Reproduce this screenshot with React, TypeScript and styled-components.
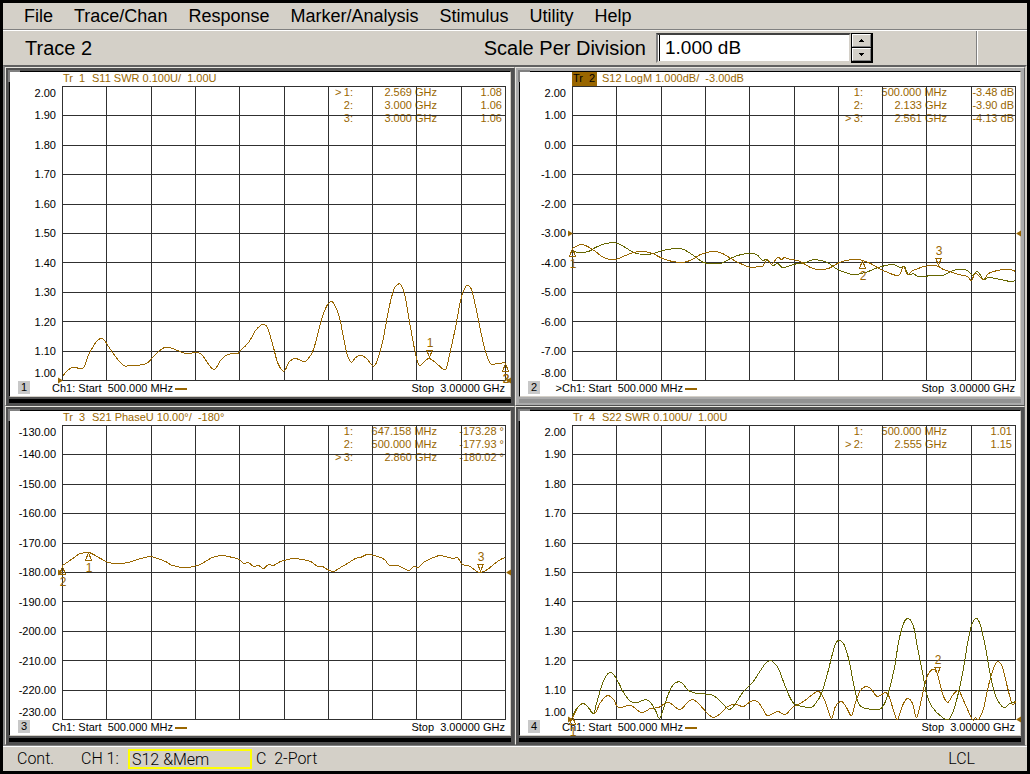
import React from "react";
import styled, { createGlobalStyle } from "styled-components";

const AMBER = "#996600";
const OLIVE = "#666600";
const FACE = "#d4d0c8";
const UI = `"Liberation Sans", Arial, sans-serif`;
const PLOT_W = 444;
const PLOT_H = 295;

type Point = [number, number];

interface Trace {
  color: string;
  points: string;
}

interface MarkerGlyph {
  x: number;
  y: number;
  label: string;
  up?: boolean;
}

interface MarkerRow {
  active?: boolean;
  id: string;
  freq: string;
  value: string;
}

interface ChartWindow {
  id: number;
  active?: boolean;
  title: string;
  unitless?: boolean;
  ticks: string[];
  refY: number;
  traces: Trace[];
  glyphs: MarkerGlyph[];
  rows: MarkerRow[];
}

const swrTicks = ["2.00", "1.90", "1.80", "1.70", "1.60", "1.50", "1.40", "1.30", "1.20", "1.10", "1.00"];

const windows: ChartWindow[] = [
  {
    id: 1,
    title: "S11 SWR 0.100U/  1.00U",
    unitless: true,
    ticks: swrTicks,
    refY: 294,
    traces: [
      {
        color: AMBER,
        points:
          "0,290 5,284 10,281 19,282 22,280 25,271 30,261 35,254 39,252 42,254 46,260 53,270 61,279 68,279 74,279 84,277 90,271 96,265 102,261 107,261 115,264 124,267 135,266 140,269 151,283 158,274 165,268 175,267 177,265 186,256 193,244 198,239 201,238 205,241 211,261 215,276 220,284 223,283 227,275 233,272 241,275 245,273 251,263 258,237 263,222 268,215 272,218 277,231 281,251 285,269 289,276 293,271 299,269 304,272 310,279 313,278 317,267 321,251 326,224 331,204 335,198 339,199 343,212 348,241 353,267 357,279 363,274 367,272 373,276 381,283 384,281 388,264 393,241 398,214 402,202 405,199 409,203 414,224 418,244 423,265 428,277 435,277 443,276",
      },
    ],
    glyphs: [
      { x: 367, y: 272, label: "1" },
      { x: 443, y: 277, label: "2", up: true },
      { x: 443, y: 277, label: "3", up: true },
    ],
    rows: [
      { active: true, id: "1:", freq: "2.569 GHz", value: "1.08" },
      { id: "2:", freq: "3.000 GHz", value: "1.06" },
      { id: "3:", freq: "3.000 GHz", value: "1.06" },
    ],
  },
  {
    id: 2,
    active: true,
    title: "S12 LogM 1.000dB/  -3.00dB",
    ticks: ["2.00", "1.00", "0.00", "-1.00", "-2.00", "-3.00", "-4.00", "-5.00", "-6.00", "-7.00", "-8.00"],
    refY: 147,
    traces: [
      {
        color: OLIVE,
        points:
          "0,165 8,166 16,165 23,161 30,158 40,156 45,157 53,161 61,166 71,168 81,167 90,164 96,163 103,162 111,163 121,169 131,176 140,177 148,177 158,172 165,169 175,167 184,168 190,174 194,173 200,179 205,177 210,181 218,179 225,177 233,176 241,173 248,174 255,176 265,183 273,186 281,188 293,186 303,182 313,179 321,178 328,181 332,180 335,187 339,188 341,187 346,190 361,189 370,189 378,185 385,183 395,184 400,189 405,185 411,193 416,191 428,193 438,195 443,194",
      },
      {
        color: AMBER,
        points:
          "0,162 8,158 15,160 23,165 31,171 43,173 53,169 61,166 70,165 80,167 90,172 100,175 110,176 120,173 128,168 140,165 150,167 160,173 170,178 179,181 186,180 190,180 195,173 199,178 205,171 209,173 212,171 218,173 225,174 231,177 238,181 246,183 256,182 265,177 273,174 285,173 293,175 298,177 305,181 313,185 326,189 331,180 335,188 340,184 346,182 351,180 361,179 366,180 371,183 380,186 390,189 395,190 399,194 403,187 411,193 416,187 425,184 431,183 438,183 443,185",
      },
    ],
    glyphs: [
      { x: 0, y: 162, label: "1", up: true },
      { x: 290, y: 174, label: "2", up: true },
      { x: 366, y: 180, label: "3" },
    ],
    rows: [
      { id: "1:", freq: "500.000 MHz", value: "-3.48 dB" },
      { id: "2:", freq: "2.133 GHz", value: "-3.90 dB" },
      { active: true, id: "3:", freq: "2.561 GHz", value: "-4.13 dB" },
    ],
  },
  {
    id: 3,
    title: "S21 PhaseU 10.00°/  -180°",
    ticks: ["-130.00", "-140.00", "-150.00", "-160.00", "-170.00", "-180.00", "-190.00", "-200.00", "-210.00", "-220.00", "-230.00"],
    refY: 147,
    traces: [
      {
        color: AMBER,
        points:
          "0,140 6,136 13,131 18,128 26,127 31,129 38,133 46,137 55,138 66,137 75,134 83,132 88,131 95,133 103,136 110,140 123,142 135,140 143,136 150,132 160,130 170,132 177,134 181,138 186,137 191,141 196,140 201,143 206,139 211,140 218,136 226,134 233,133 248,136 255,141 260,141 265,144 271,146 278,142 285,138 293,133 298,132 305,129 315,131 322,134 327,140 335,140 346,145 351,141 356,142 361,137 371,132 378,130 386,132 391,133 395,132 400,139 406,140 413,145 418,147 425,144 431,139 438,134 443,132",
      },
    ],
    glyphs: [
      { x: 26, y: 127, label: "1", up: true },
      { x: 0, y: 141, label: "2", up: true },
      { x: 418, y: 147, label: "3" },
    ],
    rows: [
      { id: "1:", freq: "647.158 MHz", value: "-173.28 °" },
      { id: "2:", freq: "500.000 MHz", value: "-177.93 °" },
      { active: true, id: "3:", freq: "2.860 GHz", value: "-180.02 °" },
    ],
  },
  {
    id: 4,
    title: "S22 SWR 0.100U/  1.00U",
    unitless: true,
    ticks: swrTicks,
    refY: 294,
    traces: [
      {
        color: AMBER,
        points:
          "0,292 6,281 11,278 16,282 22,288 28,277 35,270 41,274 46,282 58,280 69,287 78,283 86,282 96,277 107,284 115,277 120,274 126,278 135,288 141,292 148,288 155,281 163,279 171,281 178,276 185,276 190,283 195,290 205,286 213,289 220,282 231,276 240,269 246,266 251,272 255,283 259,293 263,281 269,276 274,282 279,290 283,277 288,265 294,261 299,264 305,271 313,267 317,272 321,285 325,294 330,280 335,273 340,278 344,292 348,278 352,260 356,248 361,244 365,249 370,268 375,277 380,270 386,265 391,275 400,294 403,292 406,294 411,283 416,260 421,243 425,236 430,242 435,262 439,277 441,279 443,276",
      },
      {
        color: OLIVE,
        points:
          "0,290 5,282 11,278 15,281 21,288 24,278 30,258 34,250 37,247 41,249 46,257 51,267 58,276 65,277 73,274 78,277 83,285 87,293 91,283 96,268 102,258 109,257 116,265 125,268 138,269 145,273 151,279 157,284 163,278 171,266 180,257 188,245 193,238 198,235 201,237 206,243 212,259 218,273 223,279 238,282 243,278 249,268 255,248 259,232 263,218 267,215 272,220 277,237 281,258 285,275 290,282 306,284 311,280 316,267 322,242 326,217 331,198 336,193 341,201 345,222 350,247 354,268 360,282 370,292 376,294 381,285 386,267 391,243 395,218 399,200 404,193 408,200 413,222 418,250 423,270 431,282 437,278 443,276",
      },
    ],
    glyphs: [
      { x: 0, y: 291, label: "1", up: true },
      { x: 365, y: 250, label: "2" },
    ],
    rows: [
      { id: "1:", freq: "500.000 MHz", value: "1.01" },
      { active: true, id: "2:", freq: "2.555 GHz", value: "1.15" },
    ],
  },
];

/* Catmull-Rom spline through the sampled points, written as cubic segments. */
function smoothPath(source: string): string {
  const p = source.split(" ").map((s) => s.split(",").map(Number) as Point);
  let d = `M${p[0][0]} ${p[0][1]}`;
  for (let i = 0; i < p.length - 1; i++) {
    const a = p[Math.max(i - 1, 0)];
    const b = p[i];
    const c = p[i + 1];
    const e = p[Math.min(i + 2, p.length - 1)];
    d += `C${b[0] + (c[0] - a[0]) / 6} ${b[1] + (c[1] - a[1]) / 6} ${c[0] - (e[0] - b[0]) / 6} ${c[1] - (e[1] - b[1]) / 6} ${c[0]} ${c[1]}`;
  }
  return d;
}

const GlobalStyle = createGlobalStyle`
  * { box-sizing: border-box; }
  body { margin: 0; background: #000; color: #000; }
`;

const Shell = styled.div`
  display: flex;
  flex-direction: column;
  min-height: 100vh;
  padding: 3px;
  background: #000;
  font-family: ${UI};
`;

const MenuBar = styled.nav`
  display: flex;
  align-items: center;
  gap: 21px;
  height: 28px;
  padding: 0 0 2px 21px;
  background: ${FACE};
  border-bottom: 1px solid #fff;
  box-shadow: inset 0 -1px #808080;
`;

const MenuButton = styled.button`
  padding: 0;
  border: 0;
  background: none;
  color: #000;
  font: 18px/24px ${UI};
`;

const Toolbar = styled.div`
  display: flex;
  height: 34px;
  background: ${FACE};
`;

const ToolbarMain = styled.div`
  display: flex;
  flex: 1;
  align-items: center;
  padding: 0 103px 0 22px;
`;

const ToolbarEnd = styled.div`
  width: 51px;
  border-left: 1px solid #808080;
  box-shadow: inset 1px 0 #fff;
`;

const ActiveTrace = styled.span`
  flex: 1;
  font-size: 20px;
  line-height: 24px;
`;

const ScaleLabel = styled.label`
  margin-right: 10px;
  font-size: 20px;
  line-height: 24px;
`;

const ScaleInput = styled.input`
  width: 195px;
  height: 30px;
  padding: 0 0 0 7px;
  border: 2px solid;
  border-color: #404040 ${FACE} ${FACE} #808080;
  border-radius: 0;
  outline: 0;
  background: linear-gradient(#000, #000) 1px 0 / 1px 100% no-repeat #fff;
  color: #000;
  font: 19px/24px ${UI};
`;

const Spinner = styled.div`
  display: grid;
  grid-template-rows: 1fr 1fr;
  gap: 1px;
  width: 22px;
  height: 30px;
  padding: 1px 2px 2px 1px;
  background: #000;
`;

const SpinButton = styled.button`
  display: flex;
  align-items: center;
  justify-content: center;
  min-height: 0;
  padding: 0;
  border: 1px solid;
  border-color: #fff #808080 #808080 #fff;
  background: ${FACE};
`;

const Workspace = styled.main`
  display: grid;
  flex: 1;
  grid-template-columns: 1fr 1fr;
  grid-template-rows: 1fr 1fr;
  border: solid;
  border-width: 2px 2px 1px;
  border-color: #606060 ${FACE} #808080 #808080;
`;

const Panel = styled.section<{ $active?: boolean }>`
  position: relative;
  display: flex;
  flex-direction: column;
  min-width: 0;
  padding: 3px 3px 2px 3px;
  border: 1px solid;
  border-color: #e8e6e0 #606060 #505050 #e8e6e0;
  background: ${(p) => (p.$active ? "#ababab" : "#505050")};
  font-size: 11px;
  line-height: 13px;

  &::before {
    content: "";
    position: absolute;
    top: 2px;
    left: 2px;
    width: 10px;
    height: 10px;
    border: solid #808080;
    border-width: 2px 0 0 2px;
  }
`;

const Screen = styled.div`
  display: grid;
  flex: 1;
  grid-template-columns: 52px 1fr 4px;
  grid-template-rows: 14px 1fr 15px;
  border: 1px solid;
  border-color: #000 ${FACE} ${FACE} #000;
  background: #fff;
`;

const PanelStrip = styled.div<{ $active?: boolean }>`
  height: 4px;
  margin-top: 2px;
  background: ${(p) => (p.$active ? "#929292" : "#000")};
`;

const Title = styled.h2`
  display: flex;
  grid-column: 2 / -1;
  gap: 5px;
  margin: 0;
  color: ${AMBER};
  font: inherit;
  white-space: pre;
`;

const TraceTag = styled.span<{ $active?: boolean }>`
  width: 25px;
  padding-left: 1px;
  background: ${(p) => (p.$active ? AMBER : "transparent")};
  color: ${(p) => (p.$active ? "#000" : AMBER)};
`;

const Axis = styled.div`
  display: grid;
  grid-row: 2;
  grid-template-rows: 1fr repeat(9, 2fr) 1fr;
  align-items: center;
  padding-right: 6px;
  text-align: right;
`;

const Plot = styled.div`
  position: relative;
  min-height: 160px;
`;

const Graph = styled.svg`
  position: absolute;
  inset: 0;
  width: 100%;
  height: 100%;
  overflow: visible;
  font: 12px ${UI};
`;

const Readout = styled.table`
  position: absolute;
  top: 0;
  right: 0;
  border-collapse: collapse;
  color: ${AMBER};
  white-space: pre;
`;

const Cell = styled.td<{ $width: number; $left?: boolean; $pad?: number }>`
  width: ${(p) => p.$width}px;
  height: 13px;
  padding: 0 ${(p) => p.$pad ?? 0}px 0 0;
  text-align: ${(p) => (p.$left ? "left" : "right")};
`;

const Footer = styled.footer`
  display: grid;
  grid-column: 1 / 3;
  grid-template-columns: 27px 7px auto 1fr auto;
  padding: 0 1px 0 8px;
  line-height: 15px;
  white-space: pre;
`;

const PanelNumber = styled.span`
  width: 12px;
  height: 13px;
  background: #c8c8c8;
  line-height: 13px;
  text-align: center;
`;

const Prompt = styled.span`
  text-align: right;
`;

const Legend = styled.span`
  align-self: center;
  width: 12px;
  height: 2px;
  margin-left: 2px;
  background: ${AMBER};
`;

const StatusBar = styled.footer`
  display: flex;
  align-items: center;
  height: 25px;
  padding: 0 52px 0 14px;
  border-top: 1px solid #fff;
  background: ${FACE};
  font: 300 16px/20px Roboto, "Liberation Sans", sans-serif;
  white-space: pre;
`;

const StatusItem = styled.span<{ $width?: number }>`
  width: ${(p) => (p.$width ? `${p.$width}px` : "auto")};
`;

const StatusBox = styled.span`
  width: 124px;
  height: 20px;
  margin-right: 4px;
  padding-left: 2px;
  border: 2px solid #ffff00;
  line-height: 18px;
`;

const StatusFill = styled.span`
  flex: 1;
`;

function Glyph({ x, y, label, up }: MarkerGlyph) {
  const s = up ? 1 : -1;
  return (
    <g>
      <path
        d={`M${x + 0.5} ${y + s}l${-3} ${7 * s}h6z`}
        fill="none"
        stroke={AMBER}
        shapeRendering="crispEdges"
      />
      <text x={x + 1} y={up ? y + 20 : y - 11} fill={AMBER} textAnchor="middle">
        {label}
      </text>
    </g>
  );
}

function Chart({ data }: { data: ChartWindow }) {
  const steps = Array.from({ length: 11 }, (_, i) => i);
  const r = data.refY + 0.5;
  return (
    <Panel $active={data.active} aria-label={`Window ${data.id}`}>
      <Screen>
        <Title>
          <TraceTag $active={data.active}>{`Tr  ${data.id}`}</TraceTag>
          <span>{data.title}</span>
        </Title>
        <Axis>
          {data.ticks.map((t) => (
            <span key={t}>{t}</span>
          ))}
        </Axis>
        <Plot>
          <Readout>
            <tbody>
              {data.rows.map((row) => (
                <tr key={row.id}>
                  <Cell $width={8} $left>{row.active ? ">" : ""}</Cell>
                  <Cell $width={10}>{row.id}</Cell>
                  <Cell $width={84}>{row.freq}</Cell>
                  <Cell $width={69} $pad={data.unitless ? 4 : 2}>{row.value}</Cell>
                </tr>
              ))}
            </tbody>
          </Readout>
          <Graph viewBox={`0 0 ${PLOT_W} ${PLOT_H}`} preserveAspectRatio="none">
            <g stroke="#303030" shapeRendering="crispEdges">
              {steps.map((i) => {
                const gx = Math.round(i * 44.3) + 0.5;
                const gy = Math.round(i * 29.4) + 0.5;
                return (
                  <React.Fragment key={i}>
                    <line x1={gx} x2={gx} y1={0} y2={PLOT_H} />
                    <line x1={0} x2={PLOT_W} y1={gy} y2={gy} />
                  </React.Fragment>
                );
              })}
            </g>
            {data.traces.map((t) => (
              <path
                key={t.color}
                d={smoothPath(t.points)}
                transform="translate(0.5 0.5)"
                fill="none"
                stroke={t.color}
                shapeRendering="crispEdges"
              />
            ))}
            <path d={`M-4 ${r - 3}L1 ${r}L-4 ${r + 3}zM449 ${r - 3}L444 ${r}L449 ${r + 3}z`} fill={AMBER} />
            {data.glyphs.map((g) => (
              <Glyph key={g.label} {...g} />
            ))}
          </Graph>
        </Plot>
        <Footer>
          <PanelNumber>{data.id}</PanelNumber>
          <Prompt>{data.active ? ">" : ""}</Prompt>
          <span>{"Ch1: Start  500.000 MHz"}</span>
          <Legend />
          <span>{"Stop  3.00000 GHz"}</span>
        </Footer>
      </Screen>
      <PanelStrip $active={data.active} />
    </Panel>
  );
}

const menus = ["File", "Trace/Chan", "Response", "Marker/Analysis", "Stimulus", "Utility", "Help"];

export default function App() {
  return (
    <>
      <GlobalStyle />
      <Shell>
        <MenuBar>
          {menus.map((m) => (
            <MenuButton key={m}>{m}</MenuButton>
          ))}
        </MenuBar>
        <Toolbar>
          <ToolbarMain>
            <ActiveTrace>Trace 2</ActiveTrace>
            <ScaleLabel htmlFor="scale">Scale Per Division</ScaleLabel>
            <ScaleInput id="scale" defaultValue="1.000 dB" />
            <Spinner>
              <SpinButton aria-label="Increase">
                <svg width="5" height="3" shapeRendering="crispEdges"><path d="M2 0h1v1h1v1h1v1H0V2h1V1h1z" /></svg>
              </SpinButton>
              <SpinButton aria-label="Decrease">
                <svg width="5" height="3" shapeRendering="crispEdges"><path d="M0 0h5v1H4v1H3v1H2V2H1V1H0z" /></svg>
              </SpinButton>
            </Spinner>
          </ToolbarMain>
          <ToolbarEnd />
        </Toolbar>
        <Workspace>
          {windows.map((w) => (
            <Chart key={w.id} data={w} />
          ))}
        </Workspace>
        <StatusBar>
          <StatusItem $width={64}>Cont.</StatusItem>
          <StatusItem $width={47}>CH 1:</StatusItem>
          <StatusBox>{"S12 &Mem"}</StatusBox>
          <StatusItem>{"C  2-Port"}</StatusItem>
          <StatusFill />
          <StatusItem>LCL</StatusItem>
        </StatusBar>
      </Shell>
    </>
  );
}
